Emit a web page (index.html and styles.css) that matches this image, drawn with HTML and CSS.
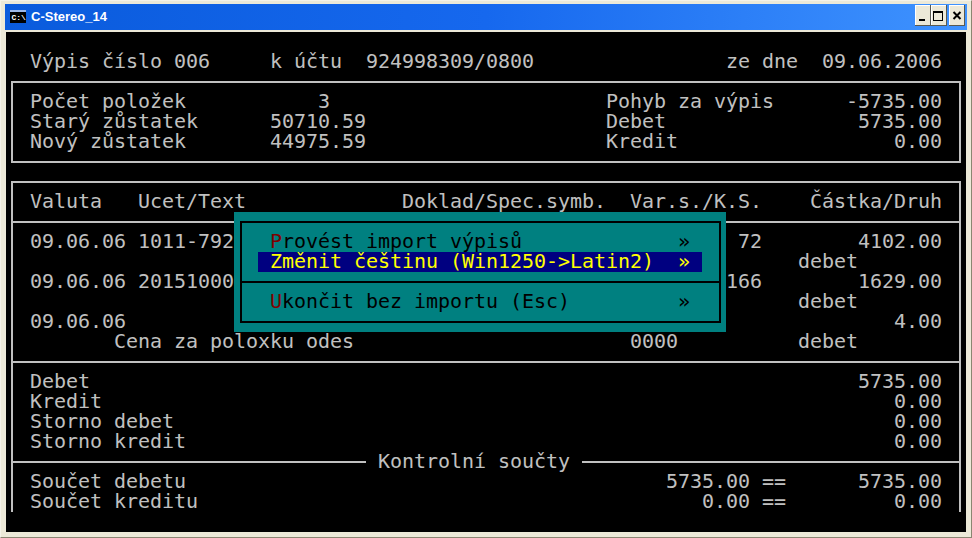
FILE: index.html
```html
<!DOCTYPE html>
<html lang="cs">
<head>
<meta charset="utf-8">
<title>C-Stereo_14</title>
<link rel="stylesheet" href="styles.css">
</head>
<body>
<div class="window">
  <header class="titlebar">
    <svg class="appicon" width="16" height="13" viewBox="0 0 16 13">
      <rect width="16" height="13" fill="#000"/>
      <rect width="16" height="2" fill="#9db8e8"/>
      <text class="icon-text" x="1.5" y="10">C:\</text>
    </svg>
    <span class="title">C-Stereo_14</span>
    <div class="buttons">
      <span class="btn"><svg width="16" height="21" viewBox="0 0 16 21"><path d="M4 14h6v2H4z"/></svg></span>
      <span class="btn"><svg width="16" height="21" viewBox="0 0 16 21"><path d="M2 6h10v10H2z M3 8v7h8V8z" fill-rule="evenodd"/></svg></span>
      <span class="btn close"><svg width="16" height="21" viewBox="0 0 16 21"><path d="M4.5 7l7 7M11.5 7l-7 7" stroke="#000" stroke-width="2" fill="none"/></svg></span>
    </div>
  </header>
  <main class="screen">
<pre class="head">

  Výpis číslo 006     k účtu  924998309/0800                ze dne  09.06.2006</pre>
    <section class="frame closed">
<pre>Počet položek           3                       Pohyb za výpis      -5735.00
Starý zůstatek      50710.59                    Debet                5735.00
Nový zůstatek       44975.59                    Kredit                  0.00</pre>
    </section>
    <section class="frame open">
      <div class="part">
<pre>Valuta   Ucet/Text             Doklad/Spec.symb.  Var.s./K.S.    Částka/Druh</pre>
      </div>
      <div class="part">
<pre>09.06.06 1011-792                                          72        4102.00
                                                                debet
09.06.06 20151000                                         166        1629.00
                                                                debet
09.06.06                                                                4.00
       Cena za poloxku odes                       0000          debet</pre>
      </div>
      <div class="part before-legend">
<pre>Debet                                                                5735.00
Kredit                                                                  0.00
Storno debet                                                            0.00
Storno kredit                                                           0.00</pre>
      </div>
      <div class="legend"><span>Kontrolní součty</span></div>
      <div class="part last">
<pre>Součet debetu                                        5735.00 ==      5735.00
Součet kreditu                                          0.00 ==         0.00</pre>
      </div>
    </section>
    <div class="menu">
      <div class="menu-box">
        <div class="menu-part">
          <div class="item"><span><b>P</b>rovést import výpisů</span><span>»</span></div>
          <div class="item active"><span>Změnit češtinu (Win1250-&gt;Latin2)</span><span>»</span></div>
        </div>
        <div class="menu-part">
          <div class="item"><span><b>U</b>končit bez importu (Esc)</span><span>»</span></div>
        </div>
      </div>
    </div>
  </main>
</div>
</body>
</html>
```
FILE: styles.css
```css
* { box-sizing: border-box; }
html, body { margin: 0; padding: 0; background: #000; }
body { width: 972px; height: 538px; overflow: hidden; }
.window {
  width: 972px; height: 538px;
  display: flex; flex-direction: column;
  background: #ece9d8;
  border: 1px solid #8a8672;
  border-top-color: #f4f2e8;
  border-left-color: #f4f2e8;
  padding: 3px 4px 5px 4px;
}
.titlebar {
  height: 26px; flex: none;
  display: flex; align-items: flex-start;
  padding: 6px 2px 0 5px;
  background: linear-gradient(90deg, #0a5bdc 0%, #1668ee 50%, #3f93ff 100%);
  color: #fff;
}
.appicon { flex: none; margin-right: 5px; }
.icon-text { font: bold 8px "Liberation Mono", monospace; fill: #fff; }
.title { font: bold 13px/13px "Liberation Sans", sans-serif; }
.buttons { margin: -5px 0 0 auto; display: flex; }
.btn {
  width: 16px; height: 21px; background: #ece9d8;
  box-shadow: inset -1px -1px 0 #5a5a50, inset 1px 1px 0 #fff;
  display: block;
}
.btn svg { display: block; }
.close { margin-left: 2px; }
.screen {
  position: relative;
  width: 960px; height: 500px;
  margin: 2px 0 0 1px;
  background: #000;
  color: #c0c0c0;
  font: 20px/20px "DejaVu Sans Mono", monospace;
  display: flow-root;
}
pre { margin: -1px 0 1px; font: inherit; letter-spacing: -0.04px; white-space: pre; }
.head { height: 41px; margin-bottom: 0; }
.frame {
  margin: 0 0 0 5px;
  width: 950px;
  border: 2px solid #c0c0c0;
  border-bottom: 0;
}
.frame pre { padding-left: 17px; }
.closed { margin-top: 9px; padding: 9px 0; border-bottom: 2px solid #c0c0c0; }
.open { margin-top: 18px; }
.part { padding: 9px 0; border-bottom: 2px solid #c0c0c0; }
.before-legend { padding-bottom: 0; border-bottom: 0; }
.last { padding: 0 0 1px; border-bottom: 0; }
.last pre { margin-bottom: 0; }
.legend {
  height: 20px;
  display: flex; align-items: center;
}
.legend::before, .legend::after { content: ""; height: 2px; background: #c0c0c0; flex: 1; }
.legend::before { flex: none; width: 353px; }
.legend span { width: 216px; text-align: center; white-space: pre; letter-spacing: -0.04px; margin-bottom: 2px; }
.menu {
  position: absolute;
  left: 228px; top: 180px;
  width: 492px; height: 120px;
  background: #008080;
  padding: 9px 5px 9px 6px;
  color: #000;
}
.menu-box { border: 2px solid #000; height: 102px; padding-top: 9px; }
.menu-part { padding: 0 17px 0 16px; }
.menu-part + .menu-part { border-top: 2px solid #000; margin: 9px 0 0; padding: 9px 17px 0 16px; }
.item { display: flex; justify-content: space-between; align-items: flex-start; height: 20px; padding: 0 12px; letter-spacing: -0.04px; }
.item span { margin-top: -1px; }
.item b { font-weight: normal; color: #800000; }
.active { background: #000080; color: #ffff00; }
```
